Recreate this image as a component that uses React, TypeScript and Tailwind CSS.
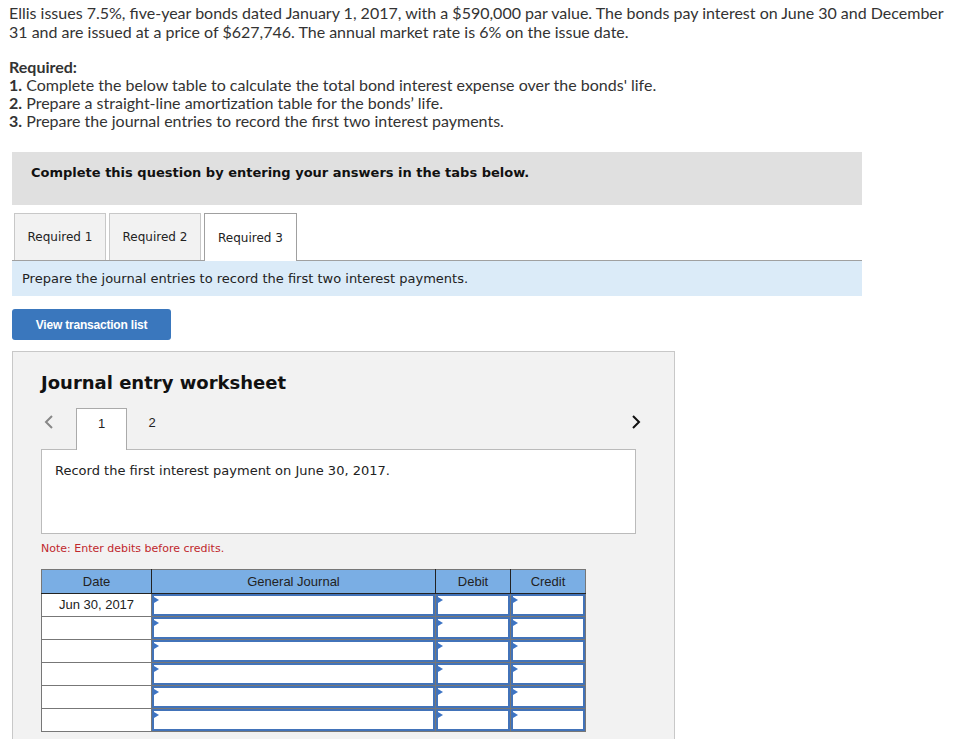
import React from 'react'

const verdana = { fontFamily: '"DejaVu Sans", Verdana, sans-serif' }
const arial = { fontFamily: '"Liberation Sans", Arial, sans-serif' }

function InputCell({ width }: { width: number }) {
  return (
    <td className="p-0 border border-[#777] bg-white" style={{ width }}>
      <div className="relative h-[22px] border-2 border-[#4273b9]">
        <span className="absolute left-0 top-[1px] w-0 h-0 border-y-[3px] border-y-transparent border-l-[5px] border-l-[#3d74c4]" />
      </div>
    </td>
  )
}

export default function App() {
  const rows = ['Jun 30, 2017', '', '', '', '', '']

  return (
    <div className="min-h-screen bg-white text-[#333]" style={{ fontFamily: 'Lato, "Open Sans", sans-serif' }}>
      {/* Problem text */}
      <div className="pl-[9px] pt-[3px] text-[16px] leading-[19px]">
        <p>
          Ellis issues 7.5%, five-year bonds dated January 1, 2017, with a $590,000 par value. The bonds pay interest on June 30 and December
          <br />
          31 and are issued at a price of $627,746. The annual market rate is 6% on the issue date.
        </p>
        <div className="mt-[17px] leading-[18px]">
          <p className="font-bold">Required:</p>
          <p><b>1.</b> Complete the below table to calculate the total bond interest expense over the bonds' life.</p>
          <p><b>2.</b> Prepare a straight-line amortization table for the bonds’ life.</p>
          <p><b>3.</b> Prepare the journal entries to record the first two interest payments.</p>
        </div>
      </div>

      <div className="ml-[12px] w-[850px]" style={verdana}>
        {/* Instructions box */}
        <div className="mt-[22px] h-[53px] bg-[#e0e0e0] pl-[19px] pt-[13px] leading-[16px] text-[13px] font-bold text-[#111]">
          Complete this question by entering your answers in the tabs below.
        </div>

        {/* Tabs */}
        <div className="mt-[8px] flex items-end gap-[3px] pl-[2px] border-b border-[#a0a0a0] h-[48px]">
          <div className="w-[92px] h-[47px] bg-[#f2f2f2] border border-b-0 border-[#c8c8c8] flex items-center justify-center text-[12px] text-[#222]">
            Required 1
          </div>
          <div className="w-[92px] h-[47px] bg-[#f2f2f2] border border-b-0 border-[#c8c8c8] flex items-center justify-center text-[12px] text-[#222]">
            Required 2
          </div>
          <div className="w-[93px] h-[48px] -mb-px bg-white border border-b-0 border-[#a0a0a0] flex items-center justify-center text-[12px] text-[#222]">
            Required 3
          </div>
        </div>

        <div className="h-[35px] bg-[#dbebf8] pl-[10px] pt-[10px] leading-[16px] text-[13px] text-[#222]">
          Prepare the journal entries to record the first two interest payments.
        </div>

        <button
          className="mt-[13px] w-[159px] h-[31px] rounded-[3px] bg-[#3a77bd] text-white text-[12px] font-bold tracking-[-0.2px]"
          style={arial}
        >
          View transaction list
        </button>

        {/* Worksheet */}
        <div className="mt-[11px] w-[663px] h-[400px] bg-[#f2f2f2] border border-[#c8c8c8] pl-[28px] pt-[20px]">
          <h2 className="text-[18px] font-bold text-[#111] leading-[22px]">Journal entry worksheet</h2>

          <div className="mt-[14px] w-[595px] flex items-end h-[41px] relative">
            <svg className="absolute left-[2px] top-[6px]" width="12" height="16" viewBox="0 0 12 16">
              <polyline points="9,2 3,8 9,14" fill="none" stroke="#888" strokeWidth="2" />
            </svg>
            <div className="ml-[35px] w-[51px] h-[42px] -mb-px bg-white border border-b-0 border-[#aaa] flex justify-center pt-[7px] leading-[16px] text-[13px] text-[#222] z-10" style={arial}>
              1
            </div>
            <div className="w-[50px] h-[41px] flex justify-center pt-[7px] leading-[16px] text-[13px] text-[#222]" style={arial}>
              2
            </div>
            <svg className="absolute right-[-6px] top-[6px]" width="12" height="16" viewBox="0 0 12 16">
              <polyline points="3,2 9,8 3,14" fill="none" stroke="#111" strokeWidth="2" />
            </svg>
          </div>

          <div className="w-[595px] h-[85px] bg-white border border-[#bbb] pl-[13px] pt-[13px] leading-[16px] text-[13px] text-[#222]">
            Record the first interest payment on June 30, 2017.
          </div>

          <p className="mt-[7px] text-[11px] leading-[16px] text-[#c0282d]">Note: Enter debits before credits.</p>

          <table className="mt-[12px] border-collapse border border-[#777] table-fixed" style={arial}>
            <thead>
              <tr className="h-[24px] bg-[#7aaee4] text-[13px] text-[#222]">
                <th className="w-[110px] font-normal border border-[#777] border-r-[#222] border-b-[#222]">Date</th>
                <th className="w-[284px] font-normal border border-[#777] border-r-[#222] border-b-[#222]">General Journal</th>
                <th className="w-[75px] font-normal border border-[#777] border-r-[#222] border-b-[#222]">Debit</th>
                <th className="w-[75px] font-normal border border-[#777] border-b-[#222]">Credit</th>
              </tr>
            </thead>
            <tbody>
              {rows.map((d, i) => (
                <tr key={i} className="h-[23px]">
                  <td className="w-[110px] p-0 border border-[#777] bg-white text-center text-[13px] text-[#222]">{d}</td>
                  <InputCell width={284} />
                  <InputCell width={75} />
                  <InputCell width={75} />
                </tr>
              ))}
            </tbody>
          </table>
        </div>
      </div>
    </div>
  )
}
